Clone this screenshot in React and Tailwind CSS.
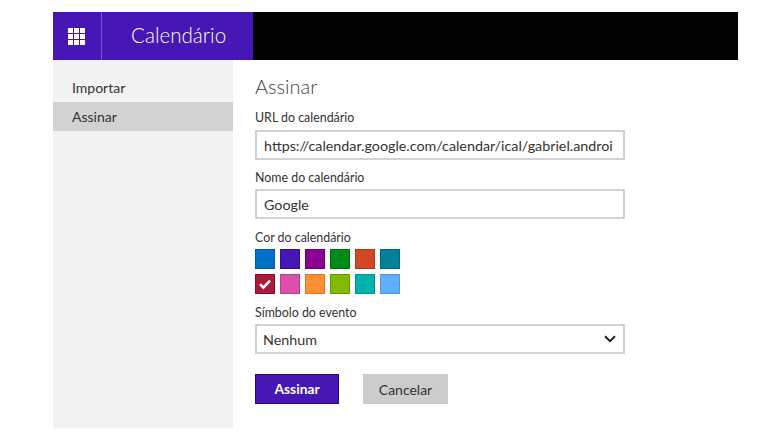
import React from "react";

const colors = [
  ["#0072c6", "#005a9e"], ["#4617b4", "#360f90"], ["#8c0095", "#6e0075"], ["#008a17", "#006c12"], ["#d24726", "#a8381e"], ["#008299", "#00677a"],
  ["#ac193d", "#7e122c"], ["#dc4fad", "#b83f90"], ["#ff8f32", "#d97a2a"], ["#82ba00", "#6a9800"], ["#00b3b0", "#009290"], ["#5eb0ff", "#4d94d8"],
];

function Label({ children, className = "" }) {
  return <div className={"text-[12.4px] leading-[17px] text-[#333] " + className}>{children}</div>;
}

function Field({ children }) {
  return (
    <div className="h-[30px] w-[370px] border-2 border-[#d2d2d2] bg-white pl-[7px] pt-[2px] flex items-center text-[14.3px] text-[#333] whitespace-nowrap">
      {children}
    </div>
  );
}

export default function App() {
  return (
    <div className="w-[782px] h-[440px] bg-white overflow-hidden pt-3 pl-[53px] pr-[44px] pb-3 flex flex-col" style={{ fontFamily: 'Lato, "Open Sans", sans-serif' }}>
      <header className="h-[48px] bg-black flex shrink-0">
        <div className="w-[200px] bg-[#4617b4] flex text-white">
          <div className="w-[49px] border-r border-[#7a55d0] flex items-center justify-center">
            <div className="grid grid-cols-3 gap-[1px] mr-[2px]">
              {Array.from({ length: 9 }).map((_, i) => (
                <span key={i} className="w-[5px] h-[5px] bg-white" />
              ))}
            </div>
          </div>
          <div className="pl-[29px] flex items-center text-[20.6px] font-light pb-[1px]">Calendário</div>
        </div>
      </header>
      <div className="flex flex-1 min-h-0">
        <aside className="w-[180px] bg-[#f2f2f2] pt-[12px] text-[14px] text-[#333] shrink-0">
          <div className="h-[30px] pl-[19px] flex items-center">Importar</div>
          <div className="h-[29px] pl-[19px] flex items-center bg-[#d2d2d2]">Assinar</div>
        </aside>
        <main className="pl-[22px] flex flex-col">
          <h1 className="mt-[13px] text-[20px] leading-[26px] font-light text-[#444]">Assinar</h1>
          <Label className="mt-[10px]">URL do calendário</Label>
          <div className="mt-[4px]"><Field>https://calendar.google.com/calendar/ical/gabriel.androi</Field></div>
          <Label className="mt-[9px]">Nome do calendário</Label>
          <div className="mt-[3px]"><Field>Google</Field></div>
          <Label className="mt-[10px]">Cor do calendário</Label>
          <div className="mt-[3px] grid grid-cols-[repeat(6,20px)] gap-x-[5px] gap-y-[5px]">
            {colors.map(([c, b], i) => (
              <div key={i} className="w-[20px] h-[20px] border flex items-center justify-center" style={{ backgroundColor: c, borderColor: b }}>
                {i === 6 && (
                  <svg width="14" height="12" viewBox="0 0 14 12" fill="none">
                    <path d="M2 6.2 L5.4 9.6 L12 2.6" stroke="#fff" strokeWidth="2.6" />
                  </svg>
                )}
              </div>
            ))}
          </div>
          <Label className="mt-[10px]">Símbolo do evento</Label>
          <div className="mt-[3px] h-[30px] w-[370px] border-2 border-[#d2d2d2] bg-white pl-[6px] pr-[7px] flex items-center justify-between text-[14.3px] text-[#333]">
            <span className="pt-[1px]">Nenhum</span>
            <svg width="12" height="8" viewBox="0 0 12 8" fill="none">
              <path d="M1 1.2 L6 6.2 L11 1.2" stroke="#222" strokeWidth="2" />
            </svg>
          </div>
          <div className="mt-[20px] flex gap-[24px]">
            <button className="w-[84px] h-[30px] bg-[#4617b4] border border-[#2a0a70] text-white text-[13.8px] font-bold">Assinar</button>
            <button className="w-[85px] h-[30px] bg-[#cccccc] text-[#333] text-[14px]">Cancelar</button>
          </div>
        </main>
      </div>
    </div>
  );
}
